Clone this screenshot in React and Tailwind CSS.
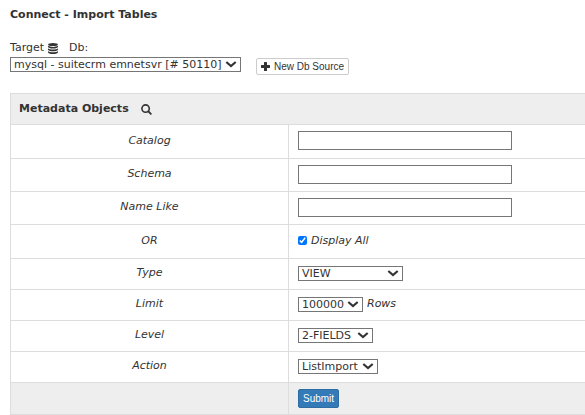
import React from "react";
import clsx from "clsx";

const textFields = [
  { id: "catalog", label: "Catalog", height: "h-[34px]" },
  { id: "schema", label: "Schema", height: "h-[33px]" },
  { id: "name-like", label: "Name Like", height: "h-[33px]" },
];

const selectFields = [
  { id: "type", label: "Type", value: "VIEW", width: "w-[105px]" },
  { id: "limit", label: "Limit", value: "100000", width: "w-[65px]", suffix: "Rows" },
  { id: "level", label: "Level", value: "2-FIELDS", width: "w-[75px]" },
  { id: "action", label: "Action", value: "ListImport", width: "w-[80px]" },
];

// Stacked discs
const DatabaseIcon = () => (
  <svg width="10" height="11" viewBox="0 0 10 11" fill="currentColor" aria-hidden="true">
    <ellipse cx="5" cy="1.5" rx="4.8" ry="1.5" />
    <path d="M0 2.600C1 3.600 3 4 5 4s4-.4 5-1.400v1.200C10 4.900 7.800 5.600 5 5.600S0 4.900 0 3.800z" />
    <path d="M0 5.200C1 6.200 3 6.600 5 6.600s4-.4 5-1.400v1.200C10 7.500 7.800 8.200 5 8.200S0 7.500 0 6.400z" />
    <path d="M0 7.900C1 8.900 3 9.300 5 9.300s4-.4 5-1.400v1.300C10 10.300 7.800 11 5 11S0 10.300 0 9.200z" />
  </svg>
);

const SearchIcon = () => (
  <svg width="11" height="11" viewBox="0 0 11 11" fill="none" stroke="currentColor" aria-hidden="true">
    <circle cx="4.600" cy="4.600" r="3.700" strokeWidth="1.600" />
    <path d="M7.400 7.400l2.400 2.400" strokeWidth="1.900" strokeLinecap="round" />
  </svg>
);

const PlusIcon = () => (
  <svg width="9" height="9" viewBox="0 0 9 9" fill="currentColor" aria-hidden="true">
    <path d="M3.500 0h2q.5 0 .5.500V3h2.500q.5 0 .5.500v2q0 .5-.5.500H6v2.500q0 .5-.5.500h-2q-.5 0-.5-.500V6H.5Q0 6 0 5.500v-2Q0 3 .5 3H3V.5q0-.5.5-.500z" />
  </svg>
);

const Select = ({ id, value, width }) => (
  <span className={clsx("relative inline-block h-[15px]", width)}>
    <select
      id={id}
      defaultValue={value}
      className="block h-full w-full appearance-none border border-[#767676] bg-white pl-[3px] leading-[13px]"
    >
      <option>{value}</option>
    </select>
    <svg
      className="pointer-events-none absolute top-1 right-1"
      width="12"
      height="7"
      viewBox="0 0 12 7"
      fill="none"
      stroke="currentColor"
      strokeWidth="2.200"
      aria-hidden="true"
    >
      <path d="M1.300 1L6 5L10.700 1" />
    </svg>
  </span>
);

const Row = ({ id, label, height, children }) => (
  <tr className={height}>
    <td className="w-[278px] border border-[#ddd] pb-[2px] text-center italic">
      <label htmlFor={id}>{label}</label>
    </td>
    <td className="border border-r-0 border-[#ddd] px-[9px] pb-[2px]">
      <div className="flex items-center gap-1">{children}</div>
    </td>
  </tr>
);

export default function App() {
  return (
    <form
      onSubmit={(e) => e.preventDefault()}
      className="min-h-screen bg-white pl-[10px] font-['DejaVu_Sans',Verdana,sans-serif] text-[11px] leading-4 text-[#333]"
    >
      <h1 className="pt-[7px] font-bold">Connect - Import Tables</h1>

      <div className="flex items-end gap-[15px] pt-4">
        <div className="flex flex-col">
          <div className="flex h-[18px] items-center">
            <span>Target</span>
            <span className="mr-[11px] ml-1">
              <DatabaseIcon />
            </span>
            <label htmlFor="db">Db:</label>
          </div>
          <Select id="db" value="mysql - suitecrm emnetsvr [# 50110]" width="w-[231px] mb-[3px]" />
        </div>
        <button
          type="button"
          className="flex h-[17px] items-center gap-1 rounded-[2px] border border-[#ccc] bg-white px-1 font-['Liberation_Sans',Arial,sans-serif] text-[10px]"
        >
          <PlusIcon />
          New Db Source
        </button>
      </div>

      <table className="mt-[18px] w-full border-collapse">
        <thead>
          <tr className="h-[31px] bg-[#eee]">
            <th colSpan={2} className="border border-r-0 border-[#ddd] px-2 text-left">
              <div className="flex items-center gap-3">
                Metadata Objects
                <SearchIcon />
              </div>
            </th>
          </tr>
        </thead>
        <tbody>
          {textFields.map((field) => (
            <Row key={field.id} {...field}>
              <input id={field.id} type="text" className="h-[19px] w-[214px] border border-[#767676] bg-white px-1" />
            </Row>
          ))}
          <Row label="OR" id="display-all" height="h-[34px]">
            <input id="display-all" type="checkbox" defaultChecked className="h-[9px] w-[9px] accent-[#0075ff]" />
            <label htmlFor="display-all" className="italic">
              Display All
            </label>
          </Row>
          {selectFields.map((field) => (
            <Row key={field.id} id={field.id} label={field.label} height="h-[31px]">
              <Select id={field.id} value={field.value} width={field.width} />
              {field.suffix && <span className="italic">{field.suffix}</span>}
            </Row>
          ))}
          <tr className="h-[32px] bg-[#eee]">
            <td className="border border-[#ddd]" />
            <td className="border border-r-0 border-[#ddd] px-[9px]">
              <button
                type="submit"
                className="block h-[19px] rounded-[2px] border border-[#2e6da4] bg-[#337ab7] px-1 font-['Liberation_Sans',Arial,sans-serif] text-[10px] leading-4 text-white"
              >
                Submit
              </button>
            </td>
          </tr>
        </tbody>
      </table>
    </form>
  );
}
